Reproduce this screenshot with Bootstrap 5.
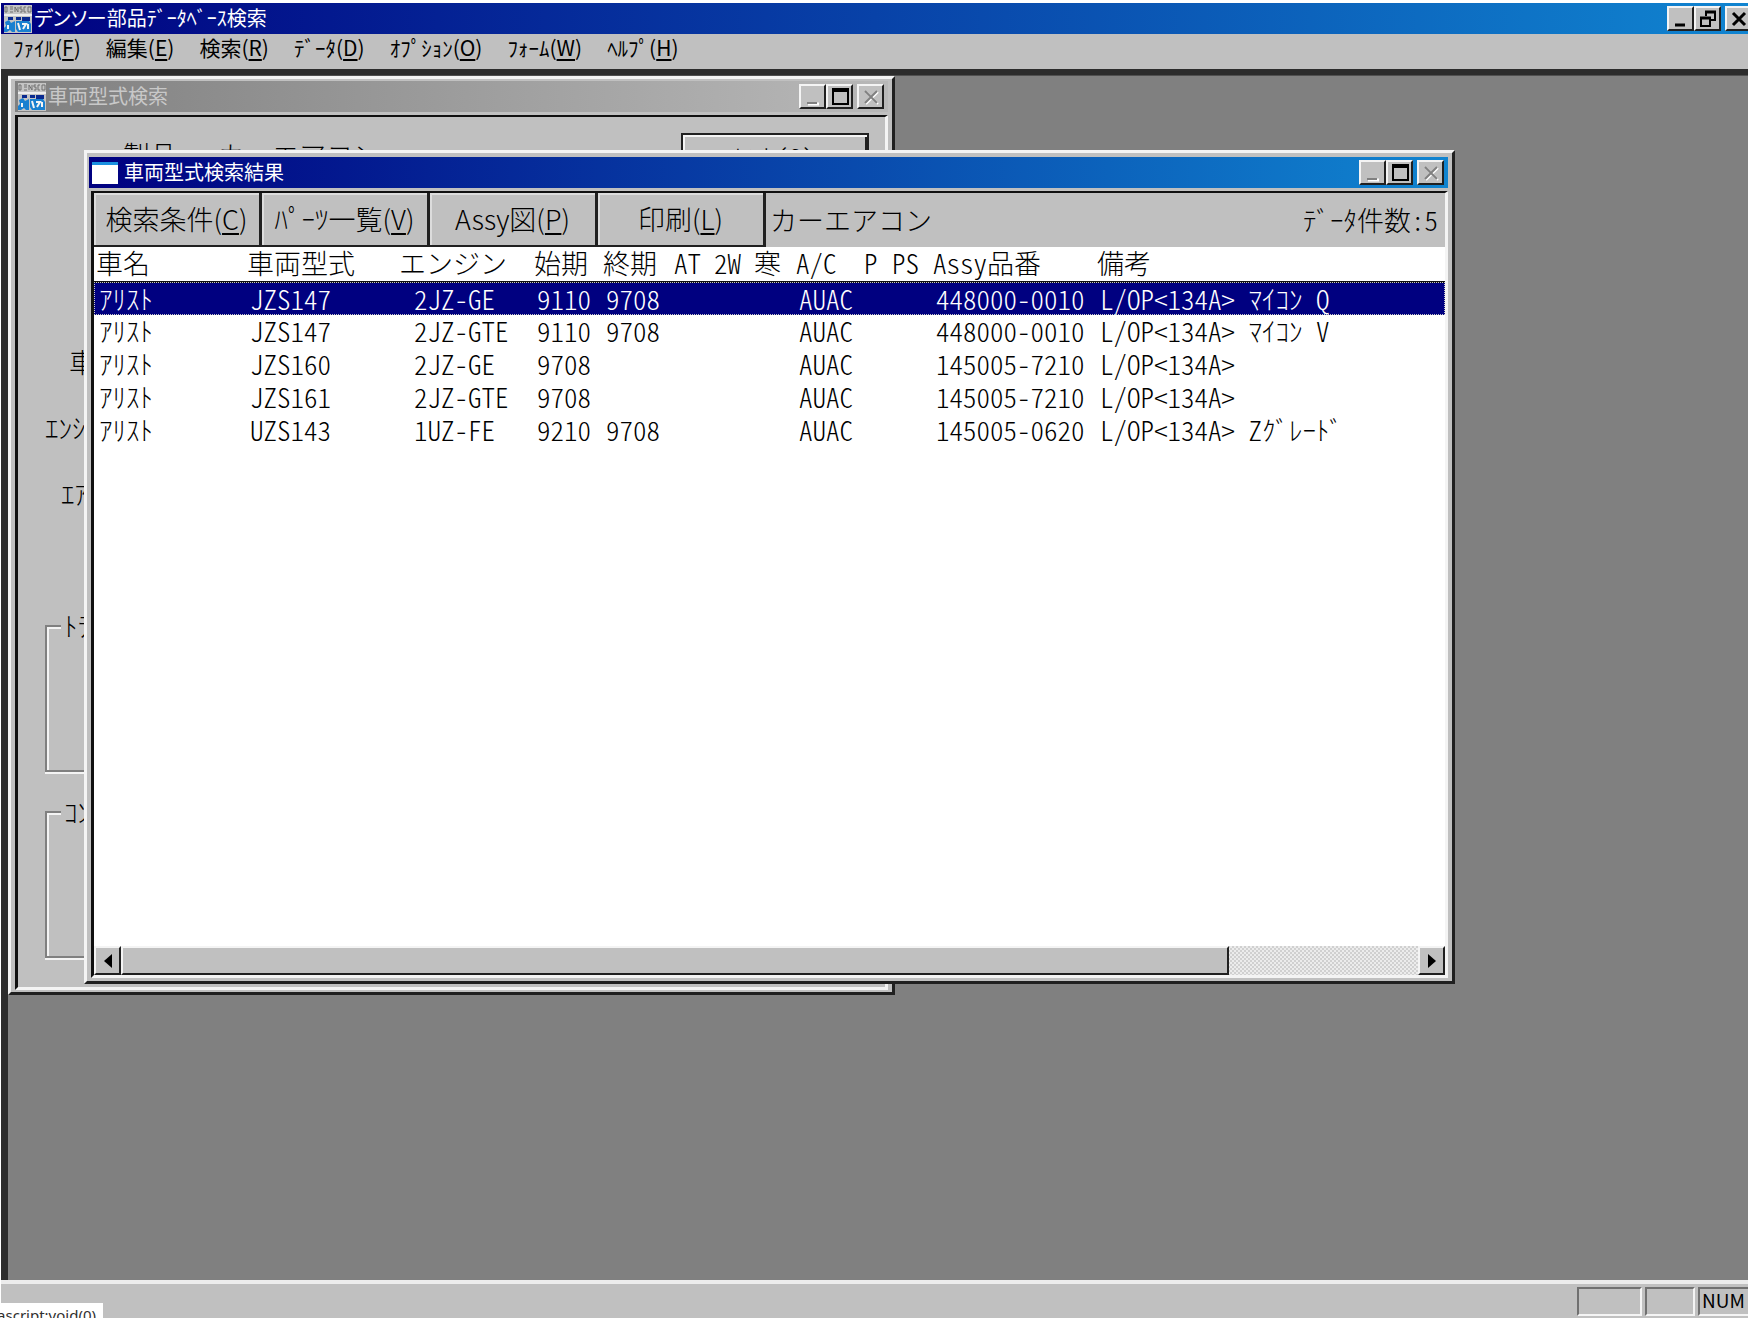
<!DOCTYPE html>
<html lang="ja">
<head>
<meta charset="utf-8">
<meta name="viewport" content="width=device-width, initial-scale=1">
<title>デンソー部品データベース検索</title>
<link rel="stylesheet" href="https://cdn.jsdelivr.net/npm/bootstrap@5.3.0/dist/css/bootstrap.min.css">
<style>
:root { --face: #c0c0c0; --shade: #808080; --dark: #202020; --lite: #f4f4f4; }
body { font-family: "Noto Sans CJK JP", sans-serif; font-size: 21px; line-height: 28px; color: #000; background: #fff; overflow: hidden; }
.app { height: 100vh; padding: 3px 0 0 1px; }
.titlebar { height: 31px; line-height: 28px; font-size: 20px; color: #fff; background: linear-gradient(90deg, #000080, #1084d0); padding: 0 4px 0 3px; gap: 2px; white-space: nowrap; font-feature-settings: "palt"; }
.titlebar > span { padding-bottom: 2px; }
.titlebar.inactive { color: #c8c8c8; background: linear-gradient(90deg, #808080, #b8b8b8); }
.titlebar svg { flex: none; }
.capbtn { width: 27px; height: 25px; padding: 0; border: 2px solid; border-color: var(--lite) var(--dark) var(--dark) var(--lite); background: var(--face); line-height: 0; flex: none; }
.capbtn svg { display: block; margin: auto; }
.app-caps { margin-right: -8px; }
.menubar { height: 35px; line-height: 26px; padding: 0 12px; gap: 25px; background: var(--face); }
.menubar a { color: #000; text-decoration: none; white-space: nowrap; }
u { text-underline-offset: 3px; text-decoration-thickness: 2px; }
.desk { background: #808080; border-style: solid; border-width: 6px 0 0 7px; border-color: #2c2c2c; box-shadow: inset 0 1px #505050; min-height: 0; }
.win { background: var(--face); border: 3px solid; border-color: var(--lite) var(--dark) var(--dark) var(--lite); }
.win-form { left: 0; top: 1px; width: 887px; height: 919px; padding: 2px 4px 2px 4px; }
.win-result { left: 76px; top: 75px; width: 1371px; height: 834px; padding: 4px 4px 3px 2px; }
.sunk { margin-top: 3px; border-style: solid; border-color: #101010 var(--lite) var(--lite) #101010; border-width: 2px 3px 3px 3px; min-height: 0; }
.win-result .sunk { margin-left: 2px; }
.form-body { font-size: 27px; font-weight: 300; padding: 16px 16px 0 27px; }
.form-top { height: 79px; }
.form-top .product { padding: 2px 0 0 78px; gap: 41px; line-height: 40px; }
.hint { width: 188px; height: 50px; font-size: 27px; font-weight: 300; border: 2px solid #202020; box-shadow: inset 2px 2px var(--lite), inset -2px -2px var(--dark); background: var(--face); padding: 0; font-feature-settings: "hwid"; }
.fields { padding-top: 117px; height: 399px; }
.fields div { height: 66px; line-height: 66px; }
.etched { border: 2px solid var(--shade); box-shadow: inset 2px 2px var(--lite), 0 2px var(--lite); height: 161px; margin-bottom: 25px; padding-left: 14px; }
.etched + .etched { margin-bottom: 0; }
.etched legend { float: none; width: auto; font-size: 27px; line-height: 30px; background: var(--face); padding: 0 3px; margin: 0; }
.toolbar { height: 54px; background: var(--face); font-size: 27px; font-feature-settings: "hwid"; }
.toolbar button { width: 168px; height: 54px; padding: 0; line-height: 44px; background: var(--face); border: 0; border-right: 3px solid var(--dark); border-bottom: 2px solid var(--dark); box-shadow: inset 2px 2px #dcdcdc; white-space: nowrap; font-weight: 300; }
.toolbar span { padding: 0 7px 0 4px; font-weight: 300; }
.list { background: #fff; min-height: 0; }
.grid { table-layout: fixed; width: 100%; font-size: 27px; font-weight: 300; font-feature-settings: "hwid"; border-collapse: collapse; white-space: pre; }
.grid th { font-weight: 300; height: 35px; line-height: 32px; padding: 0 0 0 2px; vertical-align: top; }
.grid thead { border-bottom: 2px solid #101010; }
.grid td { height: 33px; line-height: 32px; padding: 0 0 0 5px; vertical-align: top; }
.grid td.eng { padding-left: 17px; }
.grid tr.sel { background: #000080; color: #fff; outline: 1px dotted #c8c8c8; outline-offset: -1px; }
.hscroll { height: 29px; background: repeating-conic-gradient(#d0d0d0 0 25%, #ececec 0 50%) 0 0 / 4px 4px; }
.hscroll button, .thumb { border: 2px solid; border-color: var(--lite) var(--dark) var(--dark) var(--lite); background: var(--face); padding: 0; }
.hscroll button { width: 27px; line-height: 0; }
.thumb { width: 85.4%; }
.statusbar { height: 38px; background: var(--face); border-top: 4px solid #ececec; padding-top: 3px; gap: 3px; font-size: 19px; }
.pane { height: 29px; line-height: 22px; border: 2px solid; border-color: #707070 var(--lite) var(--lite) #707070; }
.pane-a { width: 65px; } .pane-b { width: 50px; } .pane-c { width: 50px; border-right: 0; padding-left: 2px; }
.linktip { left: 0; bottom: 0; width: 103px; height: 15px; padding-right: 7px; background: #fff; color: #303030; font: 15px/24px "Noto Sans", sans-serif; overflow: hidden; z-index: 5; }
</style>
</head>
<body>
<svg width="0" height="0" class="position-absolute" aria-hidden="true">
  <symbol id="logo" viewBox="0 0 28 28">
    <rect width="28" height="28" fill="#c4c4c4"/>
    <path d="M1 2v5M1 2h2v5H1M6 2h3M6 4h3M6 7h3M11 7V2l3 5V2M18 2h-2v2h2v3h-2M22 2h-2v5h2M24 2h3v5h-3z" fill="none" stroke="#707070"/>
    <path d="M0 10h28" stroke="#eee" stroke-width="2"/>
    <path d="M4 12h5v3H4zM12 12h5v3h-5zM18 12h8v4h-8z" fill="#0a2a90"/>
    <path d="M1 17l4-2 2 3 4-2v11H8l-2-2-3 2H0v-4l2-2zM12 16h13l2 3v8H14l-2-3z" fill="#1a80d0"/>
    <path d="M4 20v4M14 18l2 7M18 19h4l-3 5M24 19v5" fill="none" stroke="#f4f4f4" stroke-width="2"/>
  </symbol>
  <symbol id="min" viewBox="0 0 22 20"><path d="M5 16h10" stroke="currentColor" stroke-width="3"/></symbol>
  <symbol id="max" viewBox="0 0 22 20"><path d="M4 2h15v15H4z" fill="none" stroke="currentColor" stroke-width="2"/><path d="M3 3h17" stroke="currentColor" stroke-width="4"/></symbol>
  <symbol id="restore" viewBox="0 0 22 20"><path d="M9 7V3h9v8h-4M4 9h9v8H4z" fill="none" stroke="currentColor" stroke-width="2"/><path d="M8 3h11M3 9h11" stroke="currentColor" stroke-width="3"/></symbol>
  <symbol id="shut" viewBox="0 0 22 20"><path d="M5 4l12 12M17 4L5 16" stroke="currentColor" stroke-width="3"/></symbol>
  <symbol id="shut-off" viewBox="0 0 22 20"><path d="M6 5l12 12M18 5L6 17" stroke="#fff" stroke-width="2"/><path d="M5 4l12 12M17 4L5 16" stroke="#808080" stroke-width="2"/></symbol>
  <symbol id="min-off" viewBox="0 0 22 20"><path d="M6 17h11" stroke="#fff" stroke-width="3"/><path d="M5 16h10" stroke="#808080" stroke-width="2"/></symbol>
</svg>

<div class="app d-flex flex-column">
  <header class="titlebar d-flex align-items-center overflow-hidden flex-shrink-0">
    <svg width="28" height="28"><use href="#logo"/></svg>
    <span class="me-auto">デンソー部品ﾃﾞｰﾀﾍﾞｰｽ検索</span>
    <div class="app-caps d-flex">
      <button class="capbtn" aria-label="最小化"><svg width="22" height="20"><use href="#min"/></svg></button>
      <button class="capbtn" aria-label="元に戻す"><svg width="22" height="20"><use href="#restore"/></svg></button>
      <button class="capbtn ms-1" aria-label="閉じる"><svg width="22" height="20"><use href="#shut"/></svg></button>
    </div>
  </header>
  <nav class="menubar d-flex flex-shrink-0">
    <a href="#">ﾌｧｲﾙ(<u>F</u>)</a>
    <a href="#">編集(<u>E</u>)</a>
    <a href="#">検索(<u>R</u>)</a>
    <a href="#">ﾃﾞｰﾀ(<u>D</u>)</a>
    <a href="#">ｵﾌﾟｼｮﾝ(<u>O</u>)</a>
    <a href="#">ﾌｫｰﾑ(<u>W</u>)</a>
    <a href="#">ﾍﾙﾌﾟ(<u>H</u>)</a>
  </nav>

  <main class="desk flex-grow-1 position-relative overflow-hidden">
    <section class="win win-form position-absolute d-flex flex-column">
      <div class="titlebar inactive d-flex align-items-center flex-shrink-0">
        <svg width="28" height="28"><use href="#logo"/></svg>
        <span class="me-auto">車両型式検索</span>
        <div class="d-flex">
          <button class="capbtn" disabled aria-label="最小化"><svg width="22" height="20"><use href="#min-off"/></svg></button>
          <button class="capbtn text-black" aria-label="最大化"><svg width="22" height="20"><use href="#max"/></svg></button>
          <button class="capbtn ms-1" disabled aria-label="閉じる"><svg width="22" height="20"><use href="#shut-off"/></svg></button>
        </div>
      </div>
      <div class="sunk form-body flex-grow-1">
        <div class="form-top d-flex justify-content-between">
          <div class="product d-flex"><span>製品</span><span>カーエアコン</span></div>
          <button class="hint">ﾋﾝﾄ(S)</button>
        </div>
        <div class="fields">
          <div class="ps-4">車名</div>
          <div>ｴﾝｼﾞﾝ</div>
          <div class="ps-3">ｴｱｺﾝ</div>
        </div>
        <fieldset class="etched"><legend>ﾄﾗﾝｽﾐｯｼｮﾝ</legend></fieldset>
        <fieldset class="etched"><legend>ｺﾝﾌﾟﾚｯｻ</legend></fieldset>
      </div>
    </section>

    <section class="win win-result position-absolute d-flex flex-column">
      <div class="titlebar d-flex align-items-center flex-shrink-0">
        <svg width="26" height="22" viewBox="0 0 26 22"><path d="M0 0h26v22H0z" fill="#fff"/><path d="M0 0h26v3H0z" fill="#1a90e0"/></svg>
        <span class="me-auto ps-1">車両型式検索結果</span>
        <div class="d-flex">
          <button class="capbtn" disabled aria-label="最小化"><svg width="22" height="20"><use href="#min-off"/></svg></button>
          <button class="capbtn text-black" aria-label="最大化"><svg width="22" height="20"><use href="#max"/></svg></button>
          <button class="capbtn ms-1" disabled aria-label="閉じる"><svg width="22" height="20"><use href="#shut-off"/></svg></button>
        </div>
      </div>
      <div class="sunk flex-grow-1 d-flex flex-column">
        <div class="toolbar d-flex align-items-center flex-shrink-0">
          <button>検索条件(<u>C</u>)</button>
          <button>ﾊﾟｰﾂ一覧(<u>V</u>)</button>
          <button>Assy図(<u>P</u>)</button>
          <button>印刷(<u>L</u>)</button>
          <span class="me-auto">カーエアコン</span>
          <span>ﾃﾞｰﾀ件数:5</span>
        </div>
        <div class="list flex-grow-1">
          <table class="grid">
            <colgroup>
              <col style="width:151px"><col style="width:152px"><col style="width:135px"><col style="width:69px"><col style="width:71px"><col style="width:40px"><col style="width:40px"><col style="width:42px"><col style="width:68px"><col style="width:28px"><col style="width:41px"><col style="width:164px"><col>
            </colgroup>
            <thead>
              <tr><th>車名</th><th>車両型式</th><th>エンジン</th><th>始期</th><th>終期</th><th>AT</th><th>2W</th><th>寒</th><th>A/C</th><th>P</th><th>PS</th><th>Assy品番</th><th>備考</th></tr>
            </thead>
            <tbody>
              <tr class="sel"><td>ｱﾘｽﾄ</td><td>JZS147</td><td class="eng">2JZ-GE</td><td>9110</td><td>9708</td><td></td><td></td><td></td><td>AUAC</td><td></td><td></td><td>448000-0010</td><td>L/OP&lt;134A&gt; ﾏｲｺﾝ Q</td></tr>
              <tr><td>ｱﾘｽﾄ</td><td>JZS147</td><td class="eng">2JZ-GTE</td><td>9110</td><td>9708</td><td></td><td></td><td></td><td>AUAC</td><td></td><td></td><td>448000-0010</td><td>L/OP&lt;134A&gt; ﾏｲｺﾝ V</td></tr>
              <tr><td>ｱﾘｽﾄ</td><td>JZS160</td><td class="eng">2JZ-GE</td><td>9708</td><td></td><td></td><td></td><td></td><td>AUAC</td><td></td><td></td><td>145005-7210</td><td>L/OP&lt;134A&gt;</td></tr>
              <tr><td>ｱﾘｽﾄ</td><td>JZS161</td><td class="eng">2JZ-GTE</td><td>9708</td><td></td><td></td><td></td><td></td><td>AUAC</td><td></td><td></td><td>145005-7210</td><td>L/OP&lt;134A&gt;</td></tr>
              <tr><td>ｱﾘｽﾄ</td><td>UZS143</td><td class="eng">1UZ-FE</td><td>9210</td><td>9708</td><td></td><td></td><td></td><td>AUAC</td><td></td><td></td><td>145005-0620</td><td>L/OP&lt;134A&gt; Zｸﾞﾚｰﾄﾞ</td></tr>
            </tbody>
          </table>
        </div>
        <div class="hscroll d-flex flex-shrink-0">
          <button aria-label="左へ"><svg width="10" height="14"><path d="M9 0v14L1 7z"/></svg></button>
          <div class="flex-grow-1 d-flex"><div class="thumb"></div></div>
          <button aria-label="右へ"><svg width="10" height="14"><path d="M1 0v14l8-7z"/></svg></button>
        </div>
      </div>
    </section>
  </main>

  <footer class="statusbar d-flex justify-content-end flex-shrink-0">
    <div class="pane pane-a"></div>
    <div class="pane pane-b"></div>
    <div class="pane pane-c">NUM</div>
  </footer>
</div>
<div class="linktip position-fixed d-flex justify-content-end">javascript:void(0)</div>
<script src="https://cdn.jsdelivr.net/npm/bootstrap@5.3.0/dist/js/bootstrap.bundle.min.js"></script>
</body>
</html>
